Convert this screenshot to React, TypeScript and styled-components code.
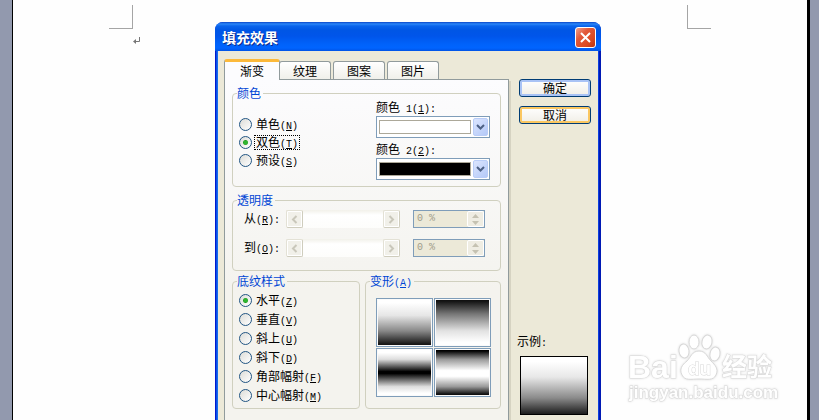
import React, { useState } from "react";
import styled, { createGlobalStyle, css } from "styled-components";

const GlobalStyle = createGlobalStyle`
  * { box-sizing: border-box; }
  html, body, #root { margin: 0; height: 100%; }
  body {
    overflow: hidden;
    font: 12px/14px "Noto Sans CJK SC", sans-serif;
    color: #000;
  }
  button, input, select { font: inherit; margin: 0; padding: 0; }
`;

const Desktop = styled.div`
  position: relative;
  display: flex;
  min-height: 100%;
  height: 100vh;
  overflow: hidden;
  background: #9299ae;
`;

const Sheet = styled.main`
  flex: 1;
  display: flex;
  justify-content: space-between;
  align-items: flex-start;
  margin: 0 9px 0 12px;
  padding: 5px 96px 0;
  border-left: 1px solid #000;
  border-right: 3px solid #000;
  background: #fefefe;
`;

const CropColumn = styled.div`
  width: 24px;
`;

const CropMark = styled.div<{ $side: "left" | "right" }>`
  height: 24px;
  border-bottom: 1px solid #a5a5a5;
  ${(p) => (p.$side === "left" ? "border-right" : "border-left")}: 1px solid #a5a5a5;
`;

const ReturnMark = styled.svg`
  display: block;
  margin: 8px 0 0 24px;
`;

const Overlay = styled.div`
  position: absolute;
  inset: 0;
  display: flex;
  justify-content: center;
  padding: 22px 3px 0 0;
`;

const Dialog = styled.section`
  display: flex;
  flex-direction: column;
  width: 386px;
  max-width: 100%;
  height: 460px;
  border-radius: 8px 8px 0 0;
  overflow: hidden;
  background: linear-gradient(90deg, #0019cf 0 1px, #0b4fe6 1px 2px, #166aee 2px 3px, #0b3fe0 3px calc(100% - 2px), #0019b4 calc(100% - 2px));
`;

const TitleBar = styled.header`
  display: flex;
  align-items: center;
  justify-content: space-between;
  height: 29px;
  padding: 1px 5px 0 7px;
  background: linear-gradient(#0a46c8 0, #2a86f8 2px, #0a64ec 4px, #0056e5 8px, #0055ea 14px, #0062fa 22px, #0064ff 26px, #0054e6 29px);
`;

const Title = styled.h1`
  margin: 0;
  font-size: 14px;
  line-height: 20px;
  font-weight: 700;
  color: #fff;
  text-shadow: 1px 1px 0 #0a2a8c;
`;

const CloseButton = styled.button`
  display: grid;
  place-items: center;
  width: 21px;
  height: 21px;
  border: 1px solid #fff;
  border-radius: 3px;
  background: linear-gradient(135deg, #f0a08c, #e2593a 35%, #dc4a22 70%, #b93512);
`;

const Body = styled.div`
  flex: 1;
  display: flex;
  gap: 10px;
  margin: 0 3px;
  padding: 8px 7px 0 6px;
  background: #ece9d8;
`;

const TabArea = styled.div`
  flex: 1;
  min-width: 0;
  display: flex;
  flex-direction: column;
`;

const TabList = styled.div`
  display: flex;
  align-items: flex-end;
  gap: 2px;
  height: 21px;
`;

const Tab = styled.button<{ $active: boolean }>`
  width: 52px;
  height: 18px;
  margin-bottom: 1px;
  border: 1px solid #919b9c;
  border-bottom: 0;
  border-radius: 3px 3px 0 0;
  background: linear-gradient(#fff, #f0f0ea);
  line-height: 16px;
  ${(p) =>
    p.$active &&
    css`
      z-index: 1;
      width: 56px;
      height: 21px;
      margin: 0 -3px 0 0;
      border-top: 3px solid #fcb93a;
      background: #fcfcfe;
      line-height: 14px;
    `}
`;

const Panel = styled.div`
  flex: 1;
  display: flex;
  flex-direction: column;
  margin-top: -1px;
  padding: 7px 7px 0;
  border: 1px solid #919b9c;
  border-bottom: 0;
  background: linear-gradient(#fcfcfe, #f4f3ee 210px);
  box-shadow: 2px 2px 0 #d6d3c2;
`;

const Group = styled.fieldset<{ $top?: number; $bottom?: number }>`
  min-width: 0;
  margin: ${(p) => p.$top ?? 0}px 0 0;
  padding: 0 4px ${(p) => p.$bottom ?? 0}px;
  border: 1px solid #d0d0bf;
  border-radius: 4px;
`;

const Legend = styled.legend`
  height: 13px;
  padding: 0 2px 0 0;
  line-height: 11px;
  color: #0046d5;
`;

const Latin = styled.span`
  font: 10px/12px "Liberation Mono", monospace;
  white-space: pre;
`;

const ColorGrid = styled.div`
  display: grid;
  grid-template-columns: minmax(0, 1fr) 114px;
  padding: 0 6px 0 2px;
`;

const ShadingList = styled.div`
  padding-left: 2px;
`;

const RadioList = styled.div<{ $row: number; $top: number }>`
  display: grid;
  grid-auto-rows: ${(p) => p.$row}px;
  align-content: start;
  justify-items: start;
  padding: ${(p) => p.$top}px 0 0;
`;

const RadioLabel = styled.label`
  display: flex;
  align-items: center;
  gap: 2px;
  white-space: nowrap;
`;

const RadioInput = styled.input`
  appearance: none;
  width: 13px;
  height: 13px;
  border: 1px solid #215583;
  border-radius: 50%;
  background: linear-gradient(135deg, #dcdcd7, #fff);
  &:checked {
    background: radial-gradient(circle, #2fb52f 0 2px, #21a121 2px, transparent 3px), linear-gradient(135deg, #dcdcd7, #fff);
  }
`;

const RadioText = styled.span<{ $focused: boolean }>`
  height: 15px;
  padding: 0 1px;
  border: 1px dotted ${(p) => (p.$focused ? "#000" : "transparent")};
  line-height: 12px;
`;

const ComboField = styled.div`
  margin-bottom: 4px;
  &:last-child { margin-bottom: 0; }
`;

const ComboLabel = styled.label`
  display: block;
  height: 14px;
  margin-bottom: 2px;
  line-height: 13px;
`;

const ComboFrame = styled.div`
  display: flex;
  align-items: center;
  justify-content: space-between;
  height: 22px;
  padding: 1px 1px 1px 2px;
  border: 1px solid #7f9db9;
  background: #fff;
`;

const ColorSelect = styled.select<{ $color: string }>`
  appearance: none;
  width: 92px;
  height: 14px;
  border: 1px solid #aca899;
  border-radius: 0;
  background: ${(p) => p.$color};
`;

const ComboArrow = styled.span`
  display: grid;
  place-items: center;
  width: 15px;
  height: 18px;
  border: 1px solid #b9cdf8;
  border-radius: 2px;
  background: linear-gradient(135deg, #dbe5fe, #b4c9f8);
`;

const SliderRow = styled.div`
  display: grid;
  grid-template-columns: 42px minmax(0, 1fr) 72px;
  align-items: center;
  height: 18px;
  padding: 0 11px 0 7px;
  margin-top: 11px;
  &:first-of-type { margin-top: 3px; }
`;

const ScrollBar = styled.div`
  display: flex;
  margin-right: 13px;
  background: linear-gradient(#f2f1ea, #fff 5px, #fdfdfb);
`;

const ScrollButton = styled.button`
  display: grid;
  place-items: center;
  width: 17px;
  height: 18px;
  border: 1px solid #e3e1d5;
  border-right-color: #cfcdbd;
  border-bottom-color: #cfcdbd;
  border-radius: 2px;
  background: #f1f0e9;
  box-shadow: inset 0 0 0 1px #fff;
`;

const Range = styled.input`
  appearance: none;
  flex: 1;
  min-width: 0;
  width: 0;
  height: 18px;
  background: transparent;
  &::-webkit-slider-thumb { appearance: none; width: 0; }
`;

const Spinner = styled.div`
  display: flex;
  height: 18px;
  border: 1px solid #7f9db9;
  background: #ece9d8;
`;

const SpinInput = styled.input`
  flex: 1;
  min-width: 0;
  padding-left: 3px;
  border: 0;
  background: transparent;
  font: 10px/14px "Liberation Mono", monospace;
  color: #a19d8b;
`;

const SpinButtons = styled.div`
  display: grid;
  grid-template-rows: 1fr 1fr;
  width: 17px;
  border: 1px solid #fff;
  border-radius: 2px;
  background: #efede3;
`;

const SpinButton = styled.button`
  display: grid;
  place-items: center;
  min-height: 0;
  border: 0;
  background: transparent;
`;

const LowerGroups = styled.div`
  display: grid;
  grid-template-columns: 128fr 136fr;
  gap: 5px;
  margin-top: 4px;
`;

const VariantGrid = styled.div`
  display: grid;
  grid-template-columns: 57px 57px;
  grid-auto-rows: 49px;
  gap: 1px;
  padding: 10px 0 11px 6px;
`;

const Variant = styled.button<{ $stops: string }>`
  border: 1px solid #7f9db9;
  background: linear-gradient(${(p) => p.$stops});
  box-shadow: inset 0 0 0 1px #fafafa;
`;

const SideColumn = styled.aside`
  display: flex;
  flex-direction: column;
  gap: 9px;
  width: 72px;
  padding-top: 20px;
`;

const PushButton = styled.button<{ $glow: string }>`
  height: 18px;
  border: 1px solid #003c74;
  border-radius: 3px;
  background: linear-gradient(#fff, #f0eee6);
  box-shadow: inset 0 0 0 2px ${(p) => p.$glow};
  line-height: 14px;
`;

const SampleBlock = styled.figure`
  display: flex;
  flex-direction: column-reverse;
  gap: 6px;
  margin: 201px 0 0 -2px;
`;

const Sample = styled.div`
  width: 68px;
  height: 59px;
  margin-left: 3px;
  border: 1px solid #000;
  background: linear-gradient(#fff 8%, #e8e8e8 35%, #8a8a8a 72%, #1c1c1c);
`;

const Watermark = styled.svg`
  position: absolute;
  right: 40px;
  bottom: 8px;
  filter: drop-shadow(0 0 1px #dcdcdc);
`;

const WatermarkText = styled.text`
  fill: #fff;
  stroke: #d8d8d8;
  stroke-width: 1;
  paint-order: stroke;
  font-family: "Liberation Sans", "Noto Sans CJK SC", sans-serif;
  font-weight: 700;
`;

interface Caption {
  text: string;
  lead?: string;
  letter: string;
  tail?: string;
}

const Mnemonic = ({ text, lead = "", letter, tail = "" }: Caption) => (
  <>
    {text}
    <Latin>
      {lead}(<u>{letter}</u>){tail}
    </Latin>
  </>
);

interface RadioGroupProps {
  name: string;
  items: [string, string][];
  initial: string;
  row: number;
  top: number;
  focused?: string;
}

const RadioGroup = ({ name, items, initial, row, top, focused }: RadioGroupProps) => {
  const [value, setValue] = useState(initial);
  return (
    <RadioList $row={row} $top={top}>
      {items.map(([text, letter]) => (
        <RadioLabel key={letter}>
          <RadioInput type="radio" name={name} checked={value === letter} onChange={() => setValue(letter)} />
          <RadioText $focused={focused === letter}>
            <Mnemonic text={text} letter={letter} />
          </RadioText>
        </RadioLabel>
      ))}
    </RadioList>
  );
};

const ColorCombo = ({ number, color }: { number: string; color: string }) => (
  <ComboField>
    <ComboLabel htmlFor={`color-${number}`}>
      <Mnemonic text="颜色" lead={` ${number}`} letter={number} tail=":" />
    </ComboLabel>
    <ComboFrame>
      <ColorSelect id={`color-${number}`} $color={color}>
        <option value={color} aria-label={color} />
      </ColorSelect>
      <ComboArrow>
        <svg width="9" height="6" viewBox="0 0 9 6">
          <path d="M1 1l3.500 3.500L8 1" fill="none" stroke="#4d6185" strokeWidth="2" />
        </svg>
      </ComboArrow>
    </ComboFrame>
  </ComboField>
);

const TransparencyRow = ({ text, letter }: { text: string; letter: string }) => (
  <SliderRow>
    <label htmlFor={`range-${letter}`}>
      <Mnemonic text={text} letter={letter} tail=":" />
    </label>
    <ScrollBar>
      <ScrollButton disabled aria-label="减少">
        <svg width="7" height="9" viewBox="0 0 7 9">
          <path d="M5.500 1L2 4.500L5.500 8" fill="none" stroke="#c9c7ba" strokeWidth="2" />
        </svg>
      </ScrollButton>
      <Range id={`range-${letter}`} type="range" disabled defaultValue={0} />
      <ScrollButton disabled aria-label="增加">
        <svg width="7" height="9" viewBox="0 0 7 9">
          <path d="M1.500 1L5 4.500L1.500 8" fill="none" stroke="#c9c7ba" strokeWidth="2" />
        </svg>
      </ScrollButton>
    </ScrollBar>
    <Spinner>
      <SpinInput type="text" disabled defaultValue="0 %" aria-label={text} />
      <SpinButtons>
        <SpinButton disabled aria-label="上调">
          <svg width="7" height="4" viewBox="0 0 7 4"><path d="M0 4L3.500 0L7 4z" fill="#c5c2b2" /></svg>
        </SpinButton>
        <SpinButton disabled aria-label="下调">
          <svg width="7" height="4" viewBox="0 0 7 4"><path d="M0 0L3.500 4L7 0z" fill="#c5c2b2" /></svg>
        </SpinButton>
      </SpinButtons>
    </Spinner>
  </SliderRow>
);

const tabs = ["渐变", "纹理", "图案", "图片"];

const variants = [
  "#fff 8%, #e6e6e6 35%, #888 68%, #161616 96%",
  "#111 4%, #777 32%, #e2e2e2 68%, #fff 92%",
  "#fff 8%, #ddd 22%, #000 48%, #000 52%, #ddd 80%, #fff 94%",
  "#000 4%, #999 22%, #fff 46%, #fff 58%, #999 80%, #111 96%",
];

const BaiduWatermark = () => (
  <Watermark width="152" height="78" viewBox="0 0 152 78" role="img" aria-label="Baidu 经验">
    <WatermarkText x="1" y="44" fontSize="32">Bai</WatermarkText>
    <g fill="#fff" stroke="#d8d8d8" strokeWidth="1">
      <ellipse cx="57" cy="17" rx="5" ry="7" transform="rotate(-8 57 17)" />
      <ellipse cx="67" cy="8" rx="5" ry="7" />
      <ellipse cx="80" cy="8" rx="5" ry="7" transform="rotate(12 80 8)" />
      <ellipse cx="88" cy="20" rx="5" ry="7" transform="rotate(12 88 20)" />
      <path d="M72 17c-7 0-8 6-12 10c-5 4-8 8-5 14c3 6 9 4 17 4s14 2 17-4c3-6-1-10-5-14c-4-4-5-10-12-10z" />
    </g>
    <WatermarkText x="61" y="41" fontSize="19">du</WatermarkText>
    <WatermarkText x="95" y="42" fontSize="25">经验</WatermarkText>
    <WatermarkText x="2" y="64" fontSize="17">jingyan.baidu.com</WatermarkText>
  </Watermark>
);

export default function App() {
  const [tab, setTab] = useState(tabs[0]);
  return (
    <Desktop>
      <GlobalStyle />
      <Sheet>
        <CropColumn>
          <CropMark $side="left" />
          <ReturnMark width="8" height="8" viewBox="0 0 8 8">
            <path d="M6.500 0v4.500H2" fill="none" stroke="#777" />
            <path d="M0 4.500L3 2v5z" fill="#777" />
          </ReturnMark>
        </CropColumn>
        <CropColumn>
          <CropMark $side="right" />
        </CropColumn>
      </Sheet>
      <BaiduWatermark />
      <Overlay>
        <Dialog role="dialog" aria-labelledby="dialog-title">
          <TitleBar>
            <Title id="dialog-title">填充效果</Title>
            <CloseButton aria-label="关闭">
              <svg width="13" height="13" viewBox="0 0 13 13">
                <path d="M2 2l9 9M11 2l-9 9" stroke="#fff" strokeWidth="2" />
              </svg>
            </CloseButton>
          </TitleBar>
          <Body>
            <TabArea>
              <TabList role="tablist">
                {tabs.map((name) => (
                  <Tab key={name} role="tab" aria-selected={tab === name} $active={tab === name} onClick={() => setTab(name)}>
                    {name}
                  </Tab>
                ))}
              </TabList>
              <Panel role="tabpanel">
                <Group $bottom={6}>
                  <Legend>颜色</Legend>
                  <ColorGrid>
                    <RadioGroup name="color" row={18} top={15} initial="T" focused="T" items={[["单色", "N"], ["双色", "T"], ["预设", "S"]]} />
                    <div>
                      <ColorCombo number="1" color="#fff" />
                      <ColorCombo number="2" color="#000" />
                    </div>
                  </ColorGrid>
                </Group>
                <Group $top={7} $bottom={13}>
                  <Legend>透明度</Legend>
                  <TransparencyRow text="从" letter="R" />
                  <TransparencyRow text="到" letter="O" />
                </Group>
                <LowerGroups>
                  <Group>
                    <Legend>底纹样式</Legend>
                    <ShadingList>
                      <RadioGroup
                        name="shading"
                        row={19}
                        top={3}
                        initial="Z"
                        items={[["水平", "Z"], ["垂直", "V"], ["斜上", "U"], ["斜下", "D"], ["角部幅射", "F"], ["中心幅射", "M"]]}
                      />
                    </ShadingList>
                  </Group>
                  <Group>
                    <Legend>
                      <Mnemonic text="变形" letter="A" />
                    </Legend>
                    <VariantGrid>
                      {variants.map((stops, i) => (
                        <Variant key={stops} $stops={stops} aria-label={`变形 ${i + 1}`} />
                      ))}
                    </VariantGrid>
                  </Group>
                </LowerGroups>
              </Panel>
            </TabArea>
            <SideColumn>
              <PushButton $glow="#a9c3f5">确定</PushButton>
              <PushButton $glow="#fbc761">取消</PushButton>
              <SampleBlock>
                <Sample />
                <figcaption>
                  示例<Latin>:</Latin>
                </figcaption>
              </SampleBlock>
            </SideColumn>
          </Body>
        </Dialog>
      </Overlay>
    </Desktop>
  );
}
